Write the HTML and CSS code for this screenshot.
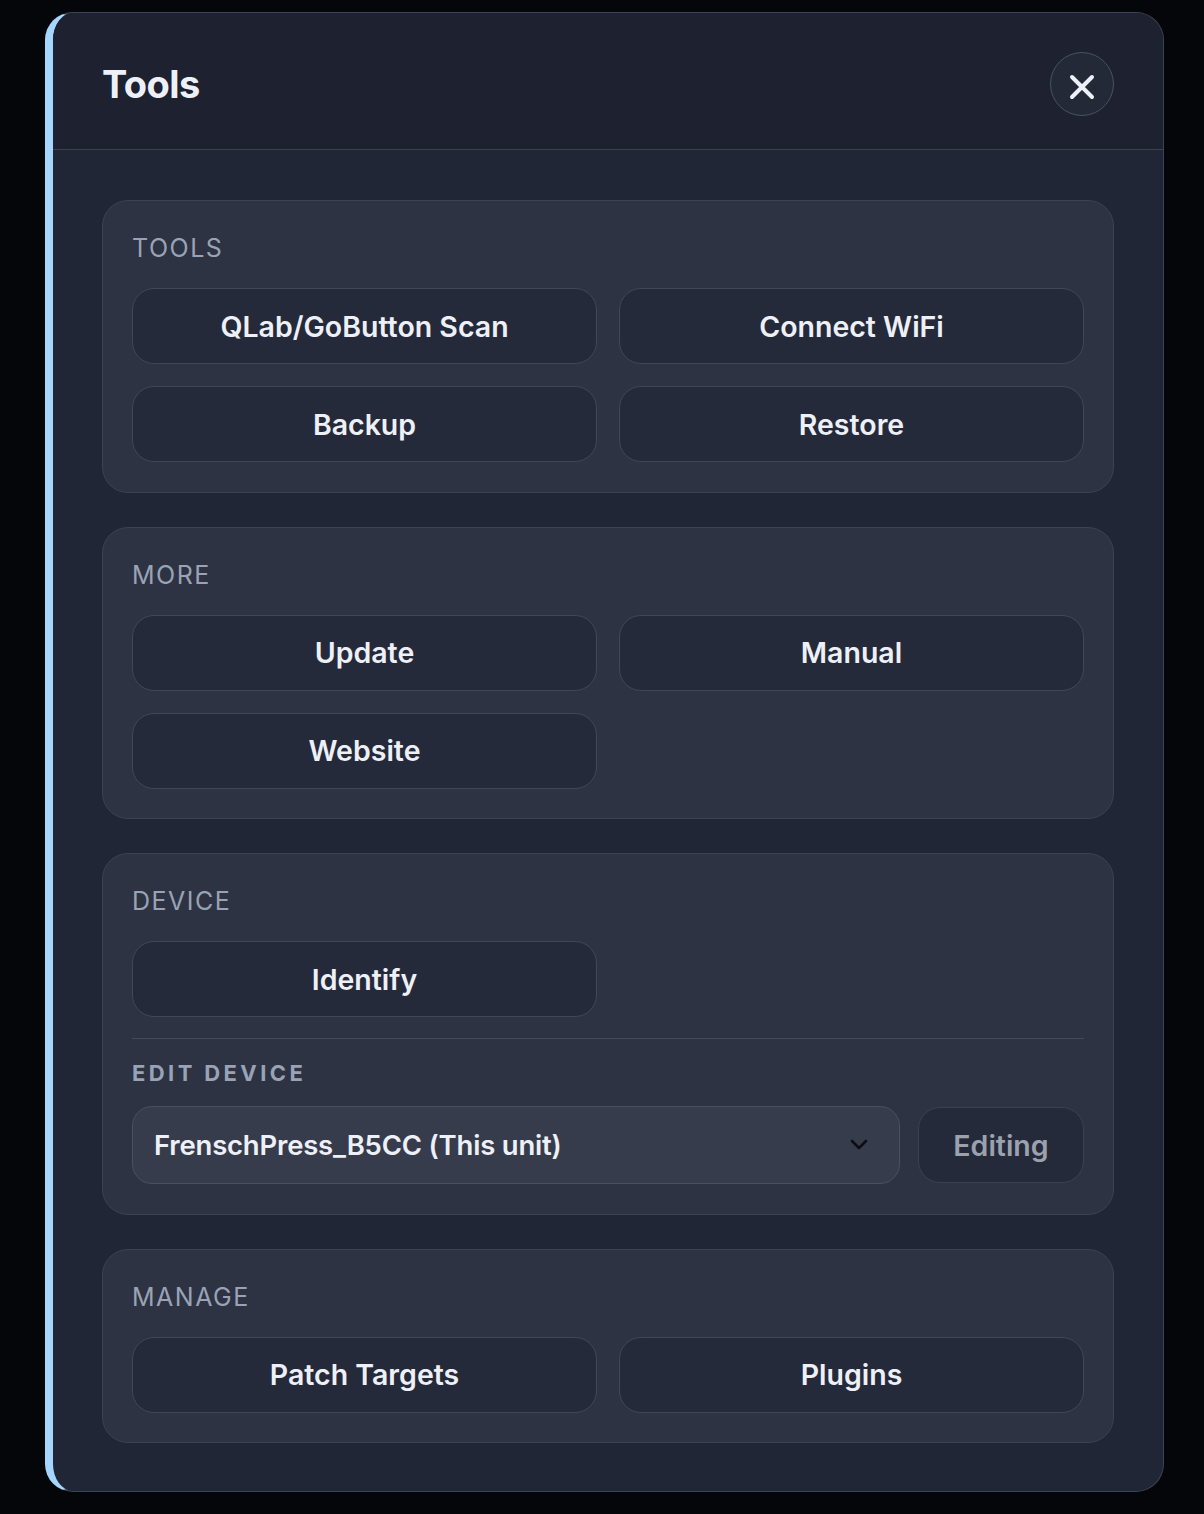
FILE: index.html
```html
<!DOCTYPE html>
<html lang="en">

<head>
    <meta charset="UTF-8">
    <meta name="viewport" content="width=device-width, initial-scale=1.0">
    <title>Tools</title>
    <link rel="stylesheet" href="styles.css">
</head>

<body>
    <div class="modal">
        <div class="modal_header">
            <h1 class="modal_title">Tools</h1>
            <button class="close_btn" aria-label="Close">
                <svg width="64" height="64" viewBox="0 0 64 64">
                    <path d="M22 25 L42 45 M42 25 L22 45" stroke="#eef0f8" stroke-width="4" stroke-linecap="round" fill="none" />
                </svg>
            </button>
        </div>

        <div class="modal_body">
            <div class="section">
                <p class="section_label">Tools</p>
                <div class="btn_grid">
                    <button class="tool_btn">QLab/GoButton Scan</button>
                    <button class="tool_btn">Connect WiFi</button>
                    <button class="tool_btn">Backup</button>
                    <button class="tool_btn">Restore</button>
                </div>
            </div>

            <div class="section">
                <p class="section_label">More</p>
                <div class="btn_grid">
                    <button class="tool_btn">Update</button>
                    <button class="tool_btn">Manual</button>
                    <button class="tool_btn">Website</button>
                </div>
            </div>

            <div class="section">
                <p class="section_label">Device</p>
                <div class="btn_grid">
                    <button class="tool_btn">Identify</button>
                </div>
                <hr class="divider">
                <p class="sub_label">Edit device</p>
                <div class="edit_row">
                    <div class="device_select">
                        <span>FrenschPress_B5CC (This unit)</span>
                        <svg width="20" height="12" viewBox="0 0 20 12">
                            <path d="M3 2 L10 9 L17 2" stroke="#0c0e12" stroke-width="2.6" stroke-linecap="round" stroke-linejoin="round" fill="none" />
                        </svg>
                    </div>
                    <button class="tool_btn editing_btn">Editing</button>
                </div>
            </div>

            <div class="section">
                <p class="section_label">Manage</p>
                <div class="btn_grid">
                    <button class="tool_btn">Patch Targets</button>
                    <button class="tool_btn">Plugins</button>
                </div>
            </div>
        </div>
    </div>
</body>

</html>
```

FILE: styles.css
```css
* {
    box-sizing: border-box;
}

body,
html {
    margin: 0;
    padding: 0;
    width: 100%;
    height: 100%;
    background-color: #050609;
    font-family: Inter, "Noto Sans", sans-serif;
    color: #eef0f8;
    overflow: hidden;
}

body {
    padding: 12px 40px 0 45px;
}

.modal {
    width: 1119px;
    height: 1480px;
    border: 1px solid #3c4354;
    border-left: 8px solid #a6d6fd;
    border-radius: 28px;
    background-color: #212636;
    overflow: hidden;
}

.modal_header {
    height: 137px;
    padding: 6px 49px 0;
    display: flex;
    align-items: center;
    justify-content: space-between;
    background-color: #1d2130;
    border-bottom: 1px solid #3a4151;
}

.modal_title {
    margin: 0;
    font-size: 38px;
    font-weight: 700;
    letter-spacing: -0.6px;
}

.close_btn {
    width: 64px;
    height: 64px;
    padding: 0;
    border: 1.5px solid #4a5162;
    border-radius: 50%;
    background-color: #242938;
    display: flex;
    align-items: center;
    justify-content: center;
    cursor: pointer;
}

.close_btn svg {
    display: block;
    flex: none;
}

.modal_body {
    padding: 50px 49px 49px;
    display: flex;
    flex-direction: column;
    gap: 34px;
}

.section {
    padding: 29px 29px 29.5px;
    border: 1px solid #3b4253;
    border-radius: 26px;
    background-color: #2d3342;
}

.section_label {
    margin: 0 0 22px;
    font-size: 25px;
    line-height: 36px;
    font-weight: 400;
    letter-spacing: 1.5px;
    text-transform: uppercase;
    color: #9aa3b6;
}

.btn_grid {
    display: grid;
    grid-template-columns: 1fr 1fr;
    gap: 22px;
}

.tool_btn {
    height: 76px;
    border: 1.5px solid #404759;
    border-radius: 22px;
    background-color: #252a3a;
    color: #eef0f8;
    font-family: Inter, "Noto Sans", sans-serif;
    font-size: 28.5px;
    font-weight: 600;
    cursor: pointer;
}

.divider {
    margin: 21px 0 0;
    border: none;
    border-top: 1.5px solid #434a5b;
}

.sub_label {
    margin: 16px 0 15px;
    font-size: 22px;
    line-height: 36px;
    font-weight: 700;
    letter-spacing: 3.4px;
    text-transform: uppercase;
    color: #9aa3b6;
}

.edit_row {
    display: flex;
    gap: 18px;
    align-items: center;
}

.device_select {
    flex: 1;
    height: 78px;
    padding: 0 30px 0 21px;
    display: flex;
    align-items: center;
    justify-content: space-between;
    border: 1.5px solid #495062;
    border-radius: 20px;
    background-color: #363c4b;
    font-size: 27.5px;
    font-weight: 600;
    letter-spacing: -0.2px;
}

.editing_btn {
    width: 166px;
    color: #9ca1ae;
    border-color: #3a4152;
}
```
